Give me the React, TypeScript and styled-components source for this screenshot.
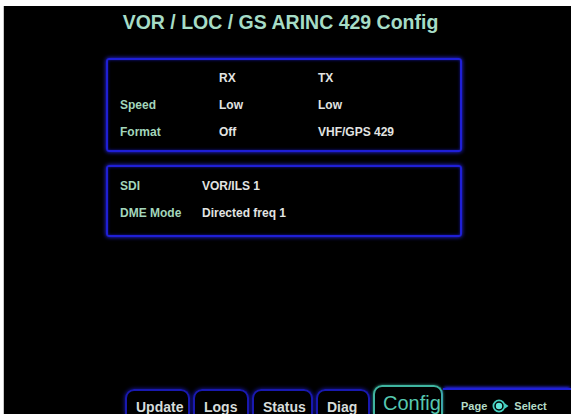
import styled, { createGlobalStyle } from 'styled-components';

const GlobalStyle = createGlobalStyle`
  html, body {
    margin: 0;
    padding: 0;
    background: #fff;
  }
  body {
    font-family: "Liberation Sans", Arial, sans-serif;
  }
`;

const Screen = styled.div`
  width: 567px;
  height: 408px;
  margin: 6px 0 0 4px;
  background: #000;
  display: flex;
  flex-direction: column;
  overflow: hidden;
  box-shadow: -1px 0 0 #c8c8c8;
`;

const Title = styled.h1`
  margin: 4px 0 0;
  padding-right: 14px;
  height: 24px;
  line-height: 24px;
  text-align: center;
  font-size: 19.5px;
  font-weight: bold;
  color: #a6dcc6;
`;

const Panels = styled.div`
  margin: 24px 0 0 102px;
  width: 356px;
  display: flex;
  flex-direction: column;
  gap: 13px;
`;

const Panel = styled.section<{ $height: number; $padTop: number }>`
  box-sizing: border-box;
  height: ${(p) => p.$height}px;
  padding: ${(p) => p.$padTop}px 0 0 12px;
  border: 2px solid #1f1fd6;
  border-radius: 3px;
  box-shadow: 0 0 4px #2a2aff, inset 0 0 3px #1515a0;
`;

const Grid = styled.div<{ $cols: string }>`
  display: grid;
  grid-template-columns: ${(p) => p.$cols};
  grid-auto-rows: 27px;
  align-items: center;
  font-size: 12px;
  font-weight: bold;
`;

const Label = styled.span`
  color: #a3d6bb;
`;

const Value = styled.span`
  color: #e2e4e2;
`;

const Spacer = styled.div`
  flex: 1;
`;

const TabBar = styled.nav`
  height: 29px;
  display: flex;
  align-items: flex-end;
  padding-left: 121px;
  gap: 3px;
`;

const Tab = styled.div<{ $active?: boolean; $width: number }>`
  box-sizing: border-box;
  flex: none;
  width: ${(p) => p.$width}px;
  height: ${(p) => (p.$active ? 29 : 25)}px;
  padding: ${(p) => (p.$active ? '5px 0 0 8px' : '7px 0 0 9px')};
  border: 2px solid ${(p) => (p.$active ? '#3fb5a0' : '#1919b0')};
  border-bottom: none;
  border-radius: 9px 9px 0 0;
  box-shadow: ${(p) => (p.$active ? '0 0 3px #2f8f80' : '0 0 4px #1a1ab8')};
  font-size: ${(p) => (p.$active ? 20 : 14)}px;
  font-weight: ${(p) => (p.$active ? 'normal' : 'bold')};
  line-height: ${(p) => (p.$active ? 22 : 18)}px;
  color: ${(p) => (p.$active ? '#56c8b0' : '#d6dcda')};
  white-space: nowrap;
  overflow: hidden;
`;

const Hint = styled.div`
  flex: 1;
  box-sizing: border-box;
  height: 26px;
  margin-left: -3px;
  padding: 9px 0 0 18px;
  border-top: 2px solid #1f1fd6;
  box-shadow: 0 -2px 3px -1px #2a2aff;
  display: flex;
  align-items: flex-start;
  gap: 5px;
  font-size: 11px;
  line-height: 14px;
  font-weight: bold;
  color: #b4dcc8;
`;

const Knob = () => (
  <svg width="17" height="14" viewBox="0 0 17 14">
    <circle cx="7" cy="7" r="5.6" fill="none" stroke="#45cfc0" strokeWidth="1.8" />
    <circle cx="7" cy="7" r="3.2" fill="#5fe6d8" />
    <path d="M13 4.5 L16.5 7 L13 9.5 Z" fill="#45cfc0" />
  </svg>
);

const tabs = [
  { name: 'Update', width: 65 },
  { name: 'Logs', width: 56 },
  { name: 'Status', width: 61 },
  { name: 'Diag', width: 54 },
];

export default function App() {
  return (
    <>
      <GlobalStyle />
      <Screen>
        <Title>VOR / LOC / GS ARINC 429 Config</Title>
        <Panels>
          <Panel $height={94} $padTop={4}>
            <Grid $cols="99px 99px 1fr">
              <span />
              <Value>RX</Value>
              <Value>TX</Value>
              <Label>Speed</Label>
              <Value>Low</Value>
              <Value>Low</Value>
              <Label>Format</Label>
              <Value>Off</Value>
              <Value>VHF/GPS 429</Value>
            </Grid>
          </Panel>
          <Panel $height={72} $padTop={5}>
            <Grid $cols="82px 1fr">
              <Label>SDI</Label>
              <Value>VOR/ILS 1</Value>
              <Label>DME Mode</Label>
              <Value>Directed freq 1</Value>
            </Grid>
          </Panel>
        </Panels>
        <Spacer />
        <TabBar>
          {tabs.map((t) => (
            <Tab key={t.name} $width={t.width}>
              {t.name}
            </Tab>
          ))}
          <Tab $active $width={70}>
            Config
          </Tab>
          <Hint>
            <span>Page</span>
            <Knob />
            <span>Select</span>
          </Hint>
        </TabBar>
      </Screen>
    </>
  );
}
